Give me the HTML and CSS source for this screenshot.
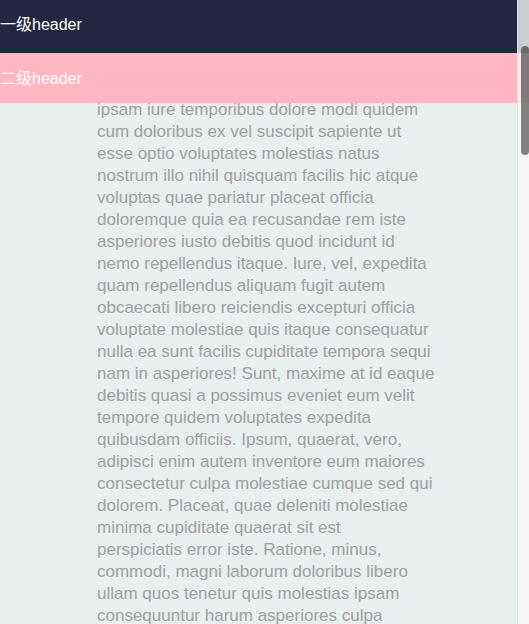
FILE: index.html
```html
<!DOCTYPE html>
<html lang="zh-CN">
<head>
<meta charset="utf-8">
<title>header demo</title>
<link rel="stylesheet" href="styles.css">
</head>
<body>
<header class="header-1">一级header</header>
<header class="header-2">二级header</header>
<main class="content">
  <p class="text">
    <span class="line">Lorem ipsum dolor sit amet consectetur</span>
    <span class="line">adipisicing elit. Quibusdam voluptatem</span>
    <span class="line">eius rerum nesciunt ducimus tempora</span>
    <span class="line">accusantium perferendis sequi laborum</span>
    <span class="line">corrupti reprehenderit fugiat velit nisi</span>
    <span class="line">dolores harum aliquid, illum delectus</span>
    <span class="line">magnam sint nemo doloremque odio totam</span>
    <span class="line">facere quo ratione. Amet, impedit dicta</span>
    <span class="line">cumque veniam provident animi minus</span>
    <span class="line">laudantium voluptatum suscipit eveniet</span>
    <span class="line">atque porro fugit ab explicabo natus</span>
    <span class="line">aspernatur deserunt similique ullam</span>
    <span class="line">ducimus sapiente praesentium alias quis</span>
    <span class="line">rem error labore excepturi, in vel nobis</span>
    <span class="line">tenetur aut numquam. Eligendi quod hic</span>
    <span class="line">laboriosam omnis accusamus quasi illo</span>
    <span class="line">ipsam iure temporibus dolore modi quidem</span>
    <span class="line">cum doloribus ex vel suscipit sapiente ut</span>
    <span class="line">esse optio voluptates molestias natus</span>
    <span class="line">nostrum illo nihil quisquam facilis hic atque</span>
    <span class="line">voluptas quae pariatur placeat officia</span>
    <span class="line">doloremque quia ea recusandae rem iste</span>
    <span class="line">asperiores iusto debitis quod incidunt id</span>
    <span class="line">nemo repellendus itaque. Iure, vel, expedita</span>
    <span class="line">quam repellendus aliquam fugit autem</span>
    <span class="line">obcaecati libero reiciendis excepturi officia</span>
    <span class="line">voluptate molestiae quis itaque consequatur</span>
    <span class="line">nulla ea sunt facilis cupiditate tempora sequi</span>
    <span class="line">nam in asperiores! Sunt, maxime at id eaque</span>
    <span class="line">debitis quasi a possimus eveniet eum velit</span>
    <span class="line">tempore quidem voluptates expedita</span>
    <span class="line">quibusdam officiis. Ipsum, quaerat, vero,</span>
    <span class="line">adipisci enim autem inventore eum maiores</span>
    <span class="line">consectetur culpa molestiae cumque sed qui</span>
    <span class="line">dolorem. Placeat, quae deleniti molestiae</span>
    <span class="line">minima cupiditate quaerat sit est</span>
    <span class="line">perspiciatis error iste. Ratione, minus,</span>
    <span class="line">commodi, magni laborum doloribus libero</span>
    <span class="line">ullam quos tenetur quis molestias ipsam</span>
    <span class="line">consequuntur harum asperiores culpa</span>
    <span class="line">voluptatibus architecto quae, mollitia</span>
    <span class="line">neque sunt ipsa vitae officiis iusto ea</span>
    <span class="line">distinctio eos quas. Dolor, nostrum sed?</span>
  </p>
</main>
<div class="scrollbar" aria-hidden="true">
  <div class="scrollbar-thumb"></div>
</div>
<script>
  window.scrollTo(0, 263);
</script>
</body>
</html>
```

FILE: styles.css
```css
html {
  background: #e9eeee;
}
body {
  margin: 0;
  background: #e9eeee;
  font-family: "Liberation Sans", "Noto Sans CJK SC", sans-serif;
}
.header-1,
.header-2 {
  position: fixed;
  left: 0;
  right: 0;
  display: flex;
  align-items: center;
  color: #ffffff;
  font-size: 16px;
  z-index: 2;
}
.header-1 {
  top: 0;
  height: 53px;
  padding-bottom: 8px;
  box-sizing: border-box;
  background: #252740;
}
.header-2 {
  top: 53px;
  height: 50px;
  padding-bottom: 2px;
  box-sizing: border-box;
  background: #ffb6c1;
}
.content {
  box-sizing: border-box;
  min-height: 3572px;
  padding: 10px 0 0 97px;
}
.text {
  margin: 0;
  color: #a0a0a0;
  font-size: 17px;
  line-height: 22px;
}
.line {
  display: block;
  white-space: nowrap;
}
.scrollbar {
  position: fixed;
  top: 0;
  right: 0;
  bottom: 0;
  width: 12px;
  box-sizing: border-box;
  padding: 46px 0 0 3px;
  background: rgba(247, 248, 248, 0.8);
  border-left: 1px solid rgba(220, 224, 224, 0.9);
  z-index: 3;
}
.scrollbar-thumb {
  height: 109px;
  border-radius: 5px;
  background: rgba(0, 0, 0, 0.48);
}
```
